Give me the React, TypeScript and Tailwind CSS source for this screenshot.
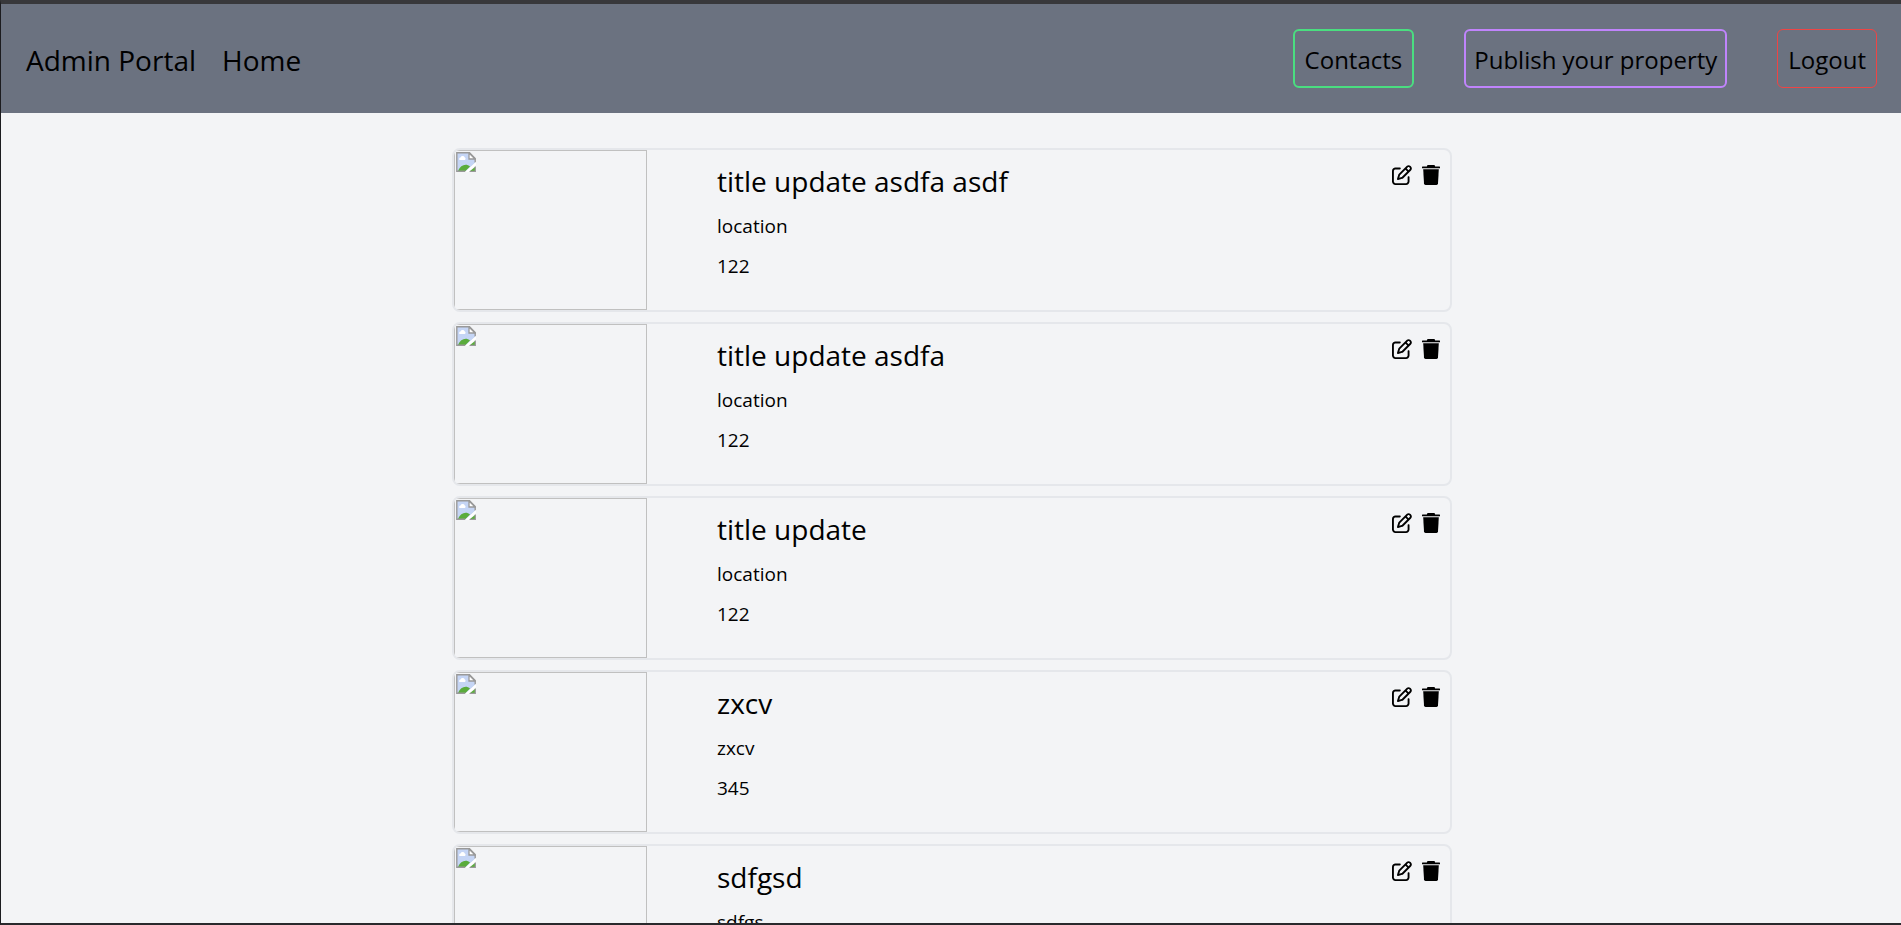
import React from "react";
import { FaRegPenToSquare } from "react-icons/fa6";

type Property = { title: string; location: string; price: string };

const properties: Property[] = [
  { title: "title update asdfa asdf", location: "location", price: "122" },
  { title: "title update asdfa", location: "location", price: "122" },
  { title: "title update", location: "location", price: "122" },
  { title: "zxcv", location: "zxcv", price: "345" },
  { title: "sdfgsd", location: "sdfgs", price: "345" },
];

function TrashIcon() {
  return (
    <svg viewBox="0 0 18 20" className="h-5 w-[18px]" fill="currentColor" aria-hidden="true">
      <path d="M5.500 0H12.500L13.200 1.500H17.500Q18 1.500 18 2V3.300H0V2Q0 1.500 .5 1.500H4.800Z" />
      <path d="M1.200 4.200H16.800L16 18.600Q15.900 20 14.500 20H3.500Q2.100 20 2 18.600Z" />
    </svg>
  );
}

function MissingImageIcon() {
  return (
    <svg viewBox="0 0 20 20" className="size-5" aria-hidden="true">
      <path d="M1 1H13L19 7V11L10 19H1Z" fill="#c5d5f5" />
      <path d="M3.500 8a1.500 1.500 0 0 1 1-2.500 2.300 2.300 0 0 1 4.300 0 1.400 1.400 0 0 1 0 2.500Z" fill="#fff" />
      <path d="M2 19C4.500 12.500 10.500 11 14 14.500L9.500 19Z" fill="#5aac3c" />
      <path d="M14 19L19 15V19Z" fill="#5aac3c" />
      <path d="M9.500 19.300H.8V.8H13.500L19.200 6.500V10.500" fill="none" stroke="#999" strokeWidth="1.400" />
      <path d="M13 1V7H19Z" fill="#fff" stroke="#999" strokeWidth="1.300" />
      <path d="M13.500 19.300H19.300V14.500" fill="none" stroke="#999" strokeWidth="1.300" />
      <path d="M9 20H12.500L20 13V10Z" fill="#fff" />
    </svg>
  );
}

function PropertyCard({ title, location, price }: Property) {
  return (
    <li className="flex overflow-hidden rounded-lg border-2 border-[#e5e7eb]">
      <div className="h-40 w-[193px] shrink-0 border border-[#c0c0c0] p-px">
        <MissingImageIcon />
      </div>
      <div className="flex grow justify-between pt-[11px] pr-2.5 pl-[70px]">
        <div className="flex flex-col gap-2.5">
          <h2 className="text-[28px] leading-10">{title}</h2>
          <p className="text-[19px] leading-[30px]">{location}</p>
          <p className="text-[19px] leading-[30px]">{price}</p>
        </div>
        <div className="flex items-start gap-2.5 pt-1">
          <button type="button" aria-label="Edit">
            <FaRegPenToSquare className="size-5" />
          </button>
          <button type="button" aria-label="Delete">
            <TrashIcon />
          </button>
        </div>
      </div>
    </li>
  );
}

export default function App() {
  return (
    <div className="flex h-screen flex-col overflow-hidden border-t-4 border-b-2 border-l border-t-[#38383b] border-b-[#29292c] border-l-[#1c1c1f] bg-[#f3f4f6] font-['Open_Sans',sans-serif] text-black">
      <header className="flex shrink-0 items-center justify-between bg-[#6b7280] py-[25px] pr-6 pl-[25px]">
        <nav className="flex gap-[26px] pt-0.5 text-[28px] leading-10">
          <a href="#admin">Admin Portal</a>
          <a href="#home">Home</a>
        </nav>
        <div className="flex gap-[50px] text-[24px] leading-[35px]">
          <a href="#contacts" className="rounded-md border-2 border-[#4ade80] px-2.5 pt-[11px] pb-[9px]">
            Contacts
          </a>
          <a href="#publish" className="rounded-md border-2 border-[#c084fc] px-2 pt-[11px] pb-[9px]">
            Publish your property
          </a>
          <button type="button" className="rounded-md border border-[#ef4444] px-2.5 pt-[11px] pb-[9px]">
            Logout
          </button>
        </div>
      </header>
      <main className="min-h-0 grow overflow-hidden pl-0.5">
        <ul className="mx-auto mt-[35px] flex max-w-[1000px] flex-col gap-2.5">
          {properties.map((property) => (
            <PropertyCard key={property.title} {...property} />
          ))}
        </ul>
      </main>
    </div>
  );
}
